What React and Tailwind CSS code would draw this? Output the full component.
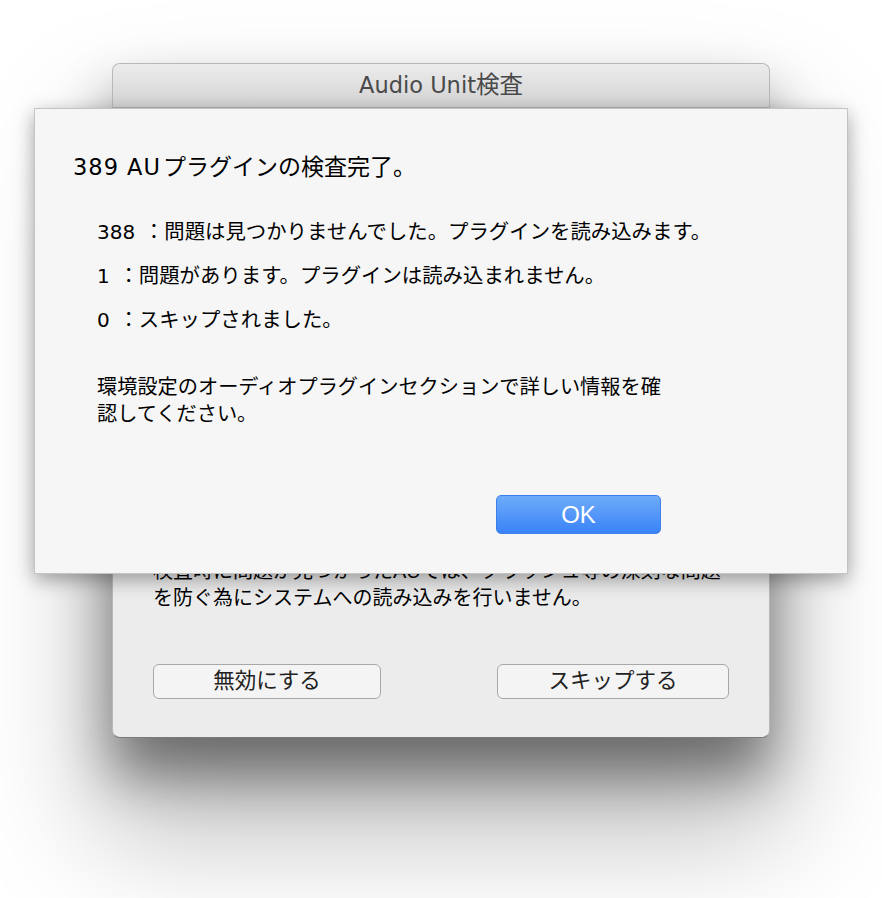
export default function App() {
  const counts = [
    { n: '388', text: '：問題は見つかりませんでした。プラグインを読み込みます。' },
    { n: '1', text: '：問題があります。プラグインは読み込まれません。' },
    { n: '0', text: '：スキップされました。' },
  ];

  return (
    <div className="relative w-[882px] h-[898px] overflow-hidden bg-white pt-[63px] pl-[112px] font-['Liberation_Sans','Noto_Sans_CJK_JP',sans-serif]">
      {/* main window */}
      <div className="relative flex flex-col w-[658px] h-[675px] rounded-[8px] bg-[#ececec] border border-[#b8b8b8] border-b-[#7a7a7a] shadow-[0_36px_55px_0_rgba(0,0,0,0.45),0_80px_120px_16px_rgba(0,0,0,0.26)]">
        <div className="flex items-center justify-center h-[44px] rounded-t-[8px] bg-linear-to-b from-[#ececec] to-[#d3d3d3] border-b border-[#b0b0b0] text-[23.5px] text-[#4a4a4a]">
          <span className="font-['DejaVu_Sans',sans-serif] text-[22.5px]">Audio Unit</span>検査
        </div>
        <div className="flex flex-col justify-end flex-1 px-[40px] pb-[38px]">
          <p className="text-[20px] leading-[27px] text-black">
            検査時に問題が見つかったAUでは、クラッシュ等の深刻な問題
            <br />
            を防ぐ為にシステムへの読み込みを行いません。
          </p>
          <div className="flex justify-between mt-[52px]">
            <button className="h-[35px] w-[228px] rounded-[6px] border border-[#a8a8a8] bg-[#f4f4f4] text-[21.5px] text-[#222]">
              無効にする
            </button>
            <button className="h-[35px] w-[232px] rounded-[6px] border border-[#a8a8a8] bg-[#f4f4f4] text-[21.5px] text-[#222]">
              スキップする
            </button>
          </div>
        </div>

        {/* sheet */}
        <div className="absolute left-[-79px] top-[44px] flex flex-col w-[814px] h-[466px] bg-[#f6f6f6] border border-[#c4c4c4] pl-[38px] pt-[43px] shadow-[0_6px_18px_rgba(0,0,0,0.35)]">
          <h1 className="text-[23px] leading-[30px] text-black">
            <span className="font-['DejaVu_Sans',sans-serif] text-[22.5px] tracking-[1px] mr-[2px]">389 AU</span>プラグインの検査完了。
          </h1>
          <ul className="mt-[28px] pl-[24px]">
            {counts.map(c => (
              <li key={c.n} className="text-[20.4px] leading-[44px] text-black">
                <span className="font-['DejaVu_Sans',sans-serif] text-[20px] mr-[3px]">{c.n}</span> {c.text}
              </li>
            ))}
          </ul>
          <p className="mt-[32px] pl-[24px] w-[605px] text-[20.2px] leading-[27px] text-black">
            環境設定のオーディオプラグインセクションで詳しい情報を確認してください。
          </p>
          <div className="flex justify-end pr-[186px] mt-[67px]">
            <button className="h-[39px] w-[165px] rounded-[5px] border border-[#3b80ec] bg-linear-to-b from-[#6eacf9] to-[#3a82f7] text-[24px] text-white">
              OK
            </button>
          </div>
        </div>
      </div>
    </div>
  );
}
